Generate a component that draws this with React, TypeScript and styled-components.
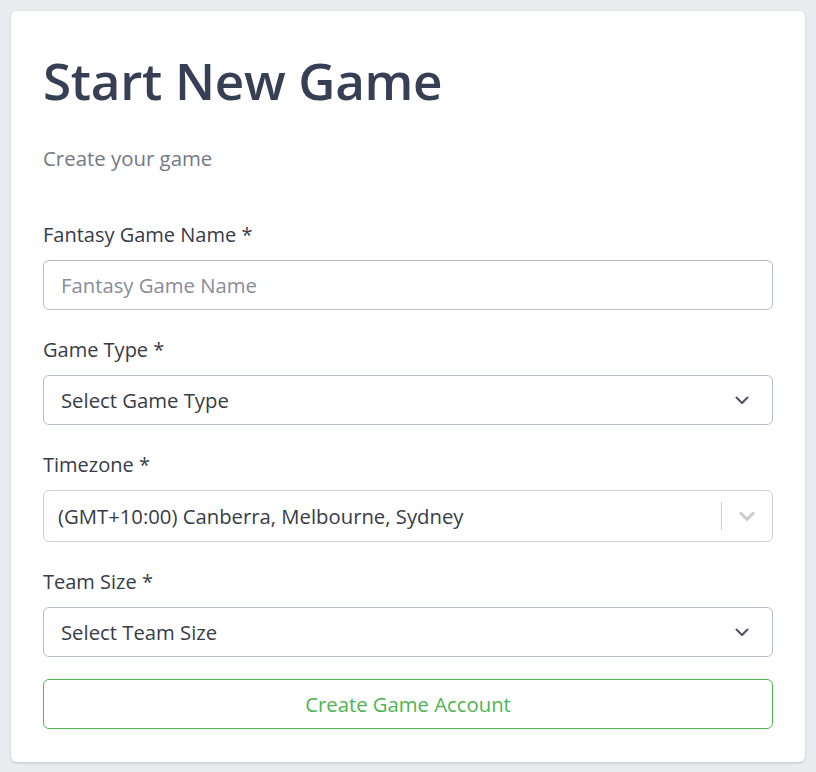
import React from "react";
import styled, { createGlobalStyle } from "styled-components";

const Global = createGlobalStyle`
  html, body { margin: 0; padding: 0; background: #ebecef; }
  body { font-family: "Open Sans", "Noto Sans", sans-serif; }
  * { box-sizing: border-box; }
`;

const Page = styled.div`
  padding: 11px 11px 10px 11px;
`;

const Card = styled.div`
  background: #ffffff;
  border-radius: 6px;
  box-shadow: 0 1px 3px rgba(0, 0, 0, 0.18);
  padding: 33px 32px 33px 32px;
  display: flex;
  flex-direction: column;
`;

const Title = styled.h1`
  margin: 0;
  font-size: 51.2px;
  line-height: 72px;
  font-weight: 600;
  color: #363f54;
  letter-spacing: -0.3px;
`;

const Subtitle = styled.p`
  margin: 27px 0 0 0;
  font-size: 20.4px;
  line-height: 30px;
  color: #737983;
`;

const Form = styled.form`
  display: flex;
  flex-direction: column;
  gap: 25px;
  margin-top: 47px;
`;

const Group = styled.div`
  display: flex;
  flex-direction: column;
  gap: 10px;
`;

const Label = styled.label`
  font-size: 20px;
  line-height: 30px;
  color: #373c47;
`;

const Input = styled.input`
  width: 100%;
  height: 50px;
  border: 1px solid #b8bcc8;
  border-radius: 6px;
  padding: 0 17px;
  font-family: inherit;
  font-size: 20.3px;
  color: #373c47;
  outline: none;
  &::placeholder { color: #878d98; }
`;

const SelectBox = styled.div<{ $light?: boolean; $h: number }>`
  height: ${(p) => p.$h}px;
  border: 1px solid ${(p) => (p.$light ? "#d0d0d4" : "#b8bcc8")};
  border-radius: 6px;
  display: flex;
  align-items: center;
  padding-left: ${(p) => (p.$light ? "14px" : "17px")};
  font-size: 20.3px;
  color: #373c47;
`;

const SelectText = styled.span`
  flex: 1;
`;

const Separator = styled.span`
  width: 1px;
  align-self: stretch;
  margin: 11px 0;
  background: #cfcfd3;
`;

const IndicatorWrap = styled.span<{ $w: number }>`
  width: ${(p) => p.$w}px;
  display: flex;
  align-items: center;
  justify-content: center;
`;

const Button = styled.button`
  height: 50px;
  margin-top: -3px;
  border: 1px solid #4bb950;
  border-radius: 6px;
  background: #ffffff;
  color: #4cb552;
  font-family: inherit;
  font-size: 20.3px;
  cursor: pointer;
`;

const Chevron = ({ color, size, sw }: { color: string; size: number; sw: number }) => (
  <svg width={size} height={size} viewBox="0 0 16 16" fill="none">
    <path d="M2.5 5.5 L8 11 L13.5 5.5" stroke={color} strokeWidth={sw} strokeLinecap="round" strokeLinejoin="round" />
  </svg>
);

export default function App() {
  return (
    <>
      <Global />
      <Page>
        <Card>
          <Title>Start New Game</Title>
          <Subtitle>Create your game</Subtitle>
          <Form onSubmit={(e) => e.preventDefault()}>
            <Group>
              <Label>Fantasy Game Name *</Label>
              <Input placeholder="Fantasy Game Name" />
            </Group>
            <Group>
              <Label>Game Type *</Label>
              <SelectBox $h={50}>
                <SelectText>Select Game Type</SelectText>
                <IndicatorWrap $w={60}>
                  <Chevron color="#4b5263" size={16} sw={2} />
                </IndicatorWrap>
              </SelectBox>
            </Group>
            <Group>
              <Label>Timezone *</Label>
              <SelectBox $light $h={52}>
                <SelectText>(GMT+10:00) Canberra, Melbourne, Sydney</SelectText>
                <Separator />
                <IndicatorWrap $w={50}>
                  <Chevron color="#cccccc" size={18} sw={2.6} />
                </IndicatorWrap>
              </SelectBox>
            </Group>
            <Group>
              <Label>Team Size *</Label>
              <SelectBox $h={50}>
                <SelectText>Select Team Size</SelectText>
                <IndicatorWrap $w={60}>
                  <Chevron color="#4b5263" size={16} sw={2} />
                </IndicatorWrap>
              </SelectBox>
            </Group>
            <Button type="submit">Create Game Account</Button>
          </Form>
        </Card>
      </Page>
    </>
  );
}
